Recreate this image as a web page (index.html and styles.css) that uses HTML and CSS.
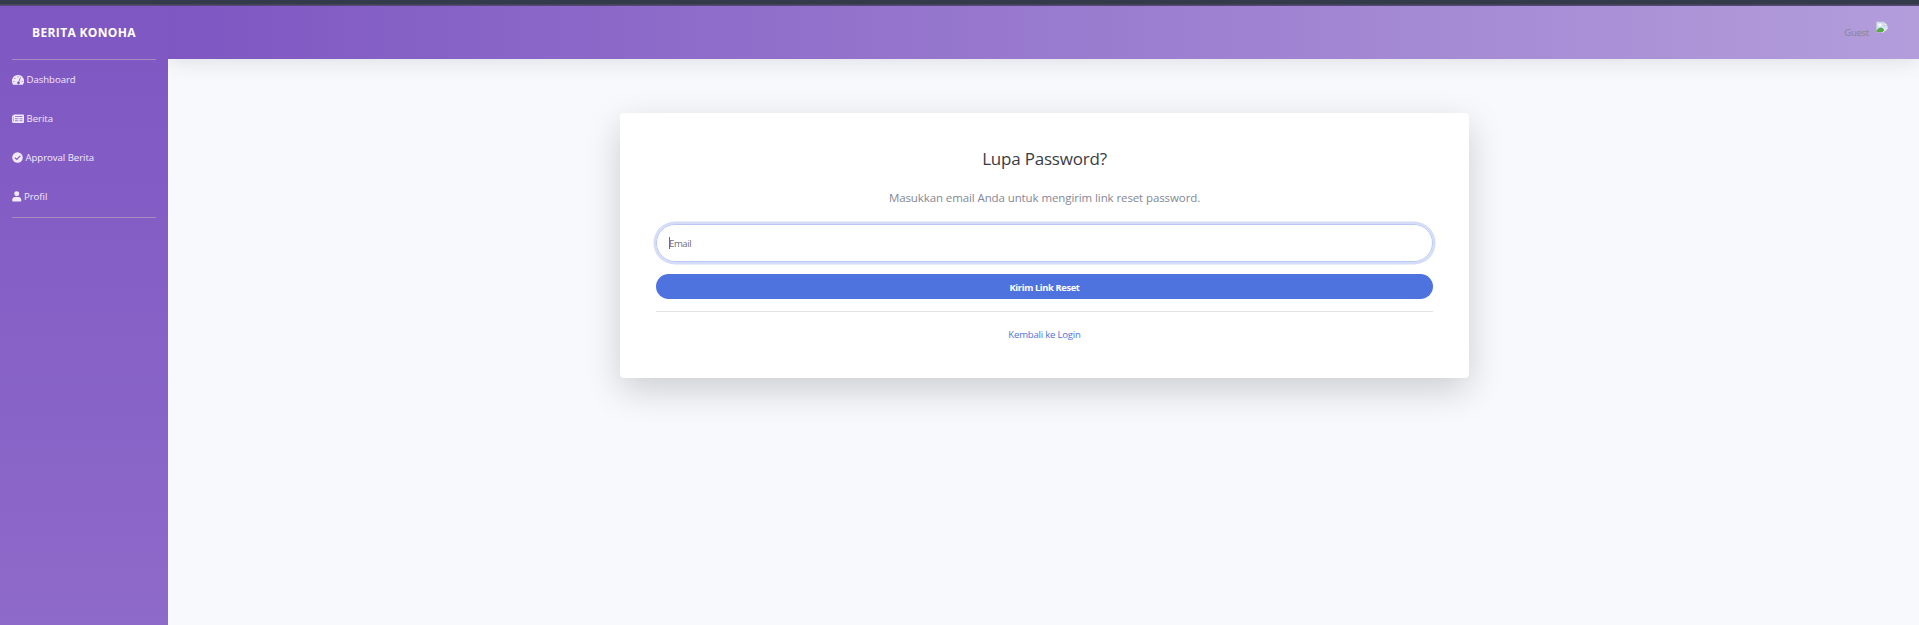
FILE: index.html
```html
<!DOCTYPE html>
<html lang="id">
<head>
<meta charset="utf-8">
<title>Lupa Password</title>
<link rel="stylesheet" href="styles.css">
</head>
<body>
<div class="window-edge"></div>
<div class="wrapper">
  <nav class="sidebar">
    <a class="brand">BERITA KONOHA</a>
    <hr class="divider">
    <a class="nav-link dashboard"><svg width="12" height="12" viewBox="0 0 24 24"><path fill="currentColor" d="M12 2a12 12 0 0 0-10 18.800q.4.700 1.200.700h17.600q.8 0 1.200-.7A12 12 0 0 0 12 2z"/><g fill="#8059c3"><circle cx="12" cy="5.500" r="1.200"/><circle cx="5.800" cy="8.500" r="1.200"/><circle cx="3.800" cy="14.500" r="1.200"/><circle cx="20.200" cy="14.500" r="1.200"/><path d="M16.300 6.500l1.300.5-3.100 8.500a2.800 2.800 0 1 1-1.500-.5z"/></g></svg><span>Dashboard</span></a>
    <a class="nav-link berita"><svg width="12" height="12" viewBox="0 0 24 24"><path fill="currentColor" d="M4.500 3H22q2 0 2 2v13q0 2-2 2H3q-3 0-3-3V7q0-2 2-2h.7q.3-2 1.800-2z"/><path d="M2.800 7v10" fill="none" stroke="#8059c3" stroke-width="1"/><path d="M6 7h15M6 11.500h6.500M15 11.500h6M6 15.500h6.500M15 15.500h6" fill="none" stroke="#8059c3" stroke-width="1.500"/></svg><span>Berita</span></a>
    <a class="nav-link approval"><svg width="11" height="11" viewBox="0 0 22 22"><circle cx="11" cy="11" r="10.500" fill="currentColor"/><path d="M5.700 11.200l3.800 3.800 7-7.300" fill="none" stroke="#825bc4" stroke-width="2.400"/></svg><span>Approval Berita</span></a>
    <a class="nav-link profil"><svg width="9.500" height="11" viewBox="0 0 20 22"><path fill="currentColor" d="M10 0a5.200 5.200 0 1 1 0 10.500A5.200 5.200 0 0 1 10 0zM5 12h10q4.500 1 4.500 5.500V20q0 1.500-1.500 1.500H2Q.5 21.500.5 20v-2.500Q.5 13 5 12z"/></svg><span>Profil</span></a>
    <hr class="divider last">
  </nav>
  <div class="content">
    <header class="topbar"><span class="guest">Guest</span>
      <svg class="avatar" width="12" height="12" viewBox="0 0 12 12"><path d="M.5 1H8l3.500 3.500V11H.5z" fill="#d3e2f7" stroke="#c3c9d2" stroke-width=".7"/><path d="M8 .8v3.700h3.700z" fill="#fafafa" stroke="#a9a9a9" stroke-width=".5"/><circle cx="4" cy="4" r="1.600" fill="#fff"/><path d="M.5 11V9.500q4.500-6 8 0V11z" fill="#58a846"/><path d="M7 12l5-5v5z" fill="#b39ddb"/><path d="M6.500 11.500l5-4.500" stroke="#fff" stroke-width="1"/></svg>
    </header>
    <main class="main">
      <section class="card">
        <h1 class="title"><span>Lupa Password?</span></h1>
        <p class="lead"><span>Masukkan email Anda untuk mengirim link reset password.</span></p>
        <div class="field"><i class="caret"></i><span class="placeholder">Email</span></div>
        <button class="submit"><span>Kirim Link Reset</span></button>
        <hr class="rule">
        <div class="back"><a>Kembali ke Login</a></div>
      </section>
    </main>
  </div>
</div>
</body>
</html>
```
FILE: styles.css
```css
* { box-sizing: border-box; }
body { margin: 0; height: 625px; overflow: hidden; background: #f8f9fd; font-family: "Open Sans", "Noto Sans", sans-serif; font-size: 9.6px; }
svg { display: block; flex: none; }
hr { border: 0; margin: 0; }
.window-edge { height: 6px; background: linear-gradient(#343c4c 0 4px, #454656 4px 5px, #5a4880 5px 6px); }
.wrapper { display: flex; height: 619px; }
.sidebar { position: relative; z-index: 1; width: 168px; flex: none; padding: 0 12px; background: linear-gradient(#7e57c2, #8e6aca); color: #f2e9fc; }
.brand { display: flex; align-items: center; justify-content: center; height: 53px; color: #fff; font-size: 12px; font-weight: 700; letter-spacing: .35px; white-space: nowrap; }
.divider { height: 1px; background: #a58bbf; }
.nav-link { display: flex; align-items: center; height: 39px; gap: 2.5px; letter-spacing: -.04px; white-space: nowrap; }
.divider.last { margin-top: 1px; }
.content { flex: 1; display: flex; flex-direction: column; }
.topbar { height: 53px; flex: none; display: flex; align-items: center; justify-content: flex-end; gap: 7px; padding-right: 31px; background: linear-gradient(90deg, #7e57c2, #b39ddb); box-shadow: 0 2px 21px rgba(58, 59, 69, .15); }
.guest { color: #858796; letter-spacing: -.3px; }
.avatar { margin-top: -11px; }
.main { padding: 54px 450px 0 452px; }
.card { height: 265px; padding: 36px; background: #fff; border-radius: 4px; box-shadow: 0 12px 36px rgba(0, 0, 0, .175); text-align: center; }
.title { margin: 0; height: 22px; font-size: 17px; line-height: 20px; letter-spacing: -.2px; font-weight: 400; color: #3a3b45; }
.lead { margin: 18px 0 0; height: 18px; font-size: 11.5px; line-height: 18px; letter-spacing: -.1px; color: #858796; }
.field { display: flex; align-items: center; height: 38px; margin-top: 17px; padding: 0 12px; border: 1px solid #bac8f3; border-radius: 19px; box-shadow: 0 0 0 2.500px #d4dcf7; color: #6e707e; letter-spacing: -.45px; }
.caret { width: 1px; height: 12px; margin-right: -1px; background: #6a6b78; }
.submit { display: block; width: 100%; height: 25px; margin-top: 12px; padding: 0; border: 0; border-radius: 13px; background: #4e73df; color: #fff; font: 700 9.3px/27px "Open Sans", sans-serif; letter-spacing: -.37px; }
.rule { height: 1px; margin-top: 12px; background: #e3e3e6; }
.back { margin-top: 16px; line-height: 14px; letter-spacing: -.22px; color: #4e73df; }
```
